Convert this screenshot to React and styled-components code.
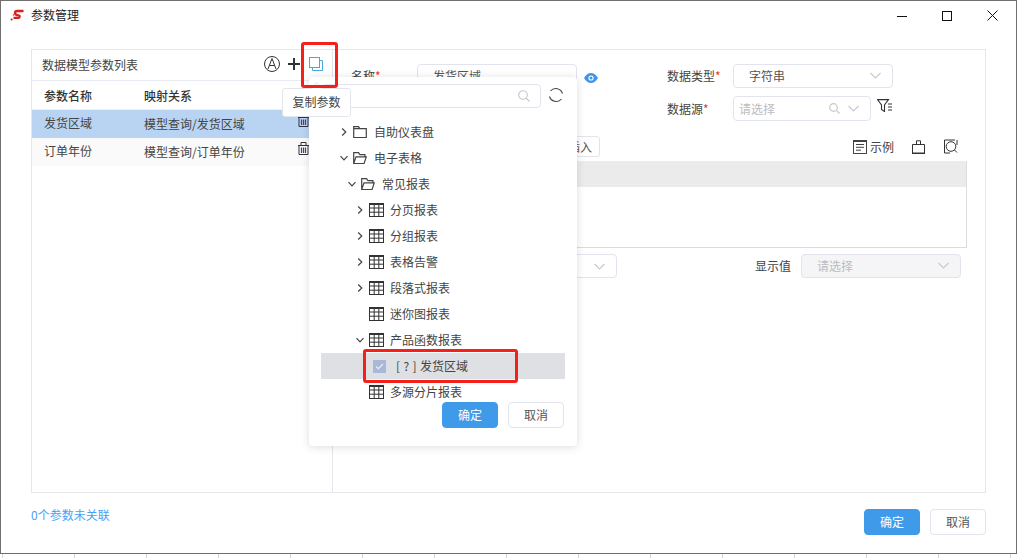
import React from 'react';
import styled, { createGlobalStyle } from 'styled-components';

const GlobalStyle = createGlobalStyle`
  html, body {
    margin: 0;
    padding: 0;
    background: #fff;
    overflow: hidden;
  }
  * {
    box-sizing: border-box;
  }
  svg {
    display: block;
    flex-shrink: 0;
  }
  body {
    font-family: "Noto Sans CJK SC", "Liberation Sans", sans-serif;
    font-size: 12px;
    color: #333;
  }
`;

const Page = styled.div`
  position: relative;
  width: 1018px;
  height: 558px;
  overflow: hidden;
  background: repeating-linear-gradient(
    90deg,
    #fff 0,
    #fff 2px,
    #d4d4d4 2px,
    #d4d4d4 3px,
    #fff 3px,
    #fff 72px
  );
`;

const Window = styled.div`
  width: 1017px;
  height: 554px;
  display: flex;
  flex-direction: column;
  background: #fff;
  border: 1px solid #6f6f6f;
`;

const TitleBar = styled.div`
  height: 29px;
  display: flex;
  align-items: center;
  padding-left: 9px;
  flex-shrink: 0;
`;

const Title = styled.div`
  margin-left: 6px;
  padding-bottom: 2px;
  font-size: 12px;
  color: #222;
`;

const WinButtons = styled.div`
  margin-left: auto;
  display: flex;
  align-items: center;
  padding-right: 18px;
  gap: 35px;
  color: #111;
`;

const Panel = styled.div`
  margin: 19px 30px 0 30px;
  width: 955px;
  height: 444px;
  display: flex;
  border: 1px solid #e5e6ec;
  flex-shrink: 0;
`;

const LeftPane = styled.div`
  width: 301px;
  border-right: 1px solid #e5e6ec;
  flex-shrink: 0;
`;

const PaneHead = styled.div`
  height: 31px;
  display: flex;
  align-items: center;
  padding: 0 0 2px 10px;
  border-bottom: 1px solid #e8ebf3;
`;

const PaneTitle = styled.div`
  flex: 1;
  color: #444;
`;

const HeadIcons = styled.div`
  display: flex;
  align-items: center;
  gap: 8px;
  padding-right: 9px;
`;

const CopyIcon = styled.svg`
  margin-left: 1px;
`;

const TableRow = styled.div`
  display: grid;
  grid-template-columns: 100px 154px 20px;
  align-items: center;
  padding-left: 12px;
  padding-bottom: ${p => (p.$head ? 0 : 2)}px;
  height: ${p => (p.$head ? 29 : 28)}px;
  font-weight: ${p => (p.$head ? 500 : 400)};
  color: ${p => (p.$head ? '#333' : '#444')};
  background: ${p => (p.$selected ? '#b9d4f2' : p.$head ? '#fff' : '#fafafa')};
  border-bottom: ${p => (p.$head ? '1px solid #eef0f5' : 'none')};
`;

const NameCell = styled.span`
  padding-bottom: 2px;
`;

const TrashCell = styled.span`
  padding-bottom: 6px;
`;

const RightPane = styled.div`
  flex: 1;
  padding: 14px 18px 0 18px;
  min-width: 0;
`;

const FormGrid = styled.div`
  display: grid;
  grid-template-columns: 66px 160px 90px 66px 160px;
  grid-template-rows: 24px 25px;
  row-gap: 8px;
  align-items: center;
`;

const Label = styled.div`
  color: #444;
  padding-bottom: ${p => (p.$up ? 2 : 0)}px;
`;

const Req = styled.span`
  color: #e33;
`;

const SelectBox = styled.div`
  height: ${p => p.$h || 24}px;
  width: ${p => p.$w || 160}px;
  display: flex;
  align-items: center;
  padding: 0 11px ${p => (p.$up ? 2 : 0)}px ${p => p.$pl || 15}px;
  gap: 8px;
  border: 1px solid #e2e3ec;
  border-radius: 4px;
  background: ${p => (p.$disabled ? '#f5f5f7' : '#fff')};
  color: ${p => (p.$placeholder ? '#bcbcc2' : '#555')};
`;

const SelectText = styled.span`
  flex: 1;
`;

const SourceCell = styled.div`
  display: flex;
  align-items: flex-start;
  gap: 6px;
`;

const FilterIcon = styled.svg`
  margin-top: 3px;
`;

const EyeCell = styled.div`
  padding: 4px 0 0 7px;
  color: #3f96e6;
  display: flex;
`;

const Toolbar = styled.div`
  margin-top: 15px;
  height: 21px;
  display: flex;
  align-items: center;
  justify-content: space-between;
  padding: 0 9px 0 199px;
`;

const ToolButton = styled.div`
  width: 50px;
  height: 21px;
  display: flex;
  align-items: center;
  justify-content: flex-end;
  padding-right: 7px;
  border: 1px solid #e2e3ec;
  border-radius: 3px;
  color: #555;
`;

const ToolIcons = styled.div`
  display: flex;
  align-items: center;
  gap: 18px;
  color: #333;
`;

const ExampleTool = styled.div`
  display: flex;
  align-items: center;
  gap: 3px;
  color: #444;
`;

const Editor = styled.div`
  margin-top: 4px;
  height: 87px;
  border: 1px solid #dcdcdc;
  border-top: none;
`;

const EditorHead = styled.div`
  height: 26px;
  background: #ebebeb;
`;

const BottomRow = styled.div`
  margin-top: 6px;
  display: flex;
  align-items: center;
  padding-left: 66px;
`;

const BottomLabel = styled.div`
  margin-left: 138px;
  width: 46px;
  padding-bottom: 2px;
  color: #444;
`;

const Footer = styled.div`
  display: flex;
  align-items: center;
  justify-content: space-between;
  padding: 16px 30px 0 30px;
`;

const LinkText = styled.div`
  color: #4a9ff5;
  margin-top: -15px;
`;

const ButtonRow = styled.div`
  display: flex;
  gap: 10px;
  justify-content: flex-end;
`;

const Btn = styled.div`
  width: 56px;
  height: 26px;
  display: flex;
  align-items: center;
  justify-content: center;
  padding-bottom: 2px;
  border-radius: 4px;
  background: ${p => (p.$primary ? '#409aea' : '#fff')};
  color: ${p => (p.$primary ? '#fff' : '#555')};
  border: 1px solid ${p => (p.$primary ? '#409aea' : '#e2e3ec')};
`;

/* overlays */
const Popover = styled.div`
  position: absolute;
  left: 309px;
  top: 77px;
  width: 268px;
  height: 369px;
  padding: 7px 12px 0;
  background: #fff;
  border-radius: 4px;
  box-shadow: 0 1px 8px rgba(60, 60, 80, 0.18);
`;

const SearchRow = styled.div`
  display: flex;
  align-items: center;
  gap: 7px;
  height: 24px;
`;

const SearchInput = styled.div`
  width: 220px;
  height: 24px;
  display: flex;
  align-items: center;
  justify-content: flex-end;
  padding-right: 10px;
  border: 1px solid #e2e3ec;
  border-radius: 4px;
  color: #c4c6ce;
`;

const RefreshIcon = styled.svg`
  margin-bottom: 2px;
`;

const Tree = styled.div`
  margin-top: 11px;
  height: 283px;
  overflow: hidden;
`;

const TreeRow = styled.div`
  height: 26px;
  display: flex;
  align-items: center;
  padding-left: ${p => 17 + p.$level * 8}px;
  background: ${p => (p.$selected ? '#dfe0e4' : 'transparent')};
  color: #444;
`;

const Caret = styled.span`
  width: 12px;
  height: 12px;
  display: flex;
  align-items: center;
  justify-content: center;
  margin-right: 3px;
  color: #444;
  flex-shrink: 0;
`;

const NodeText = styled.span`
  margin-left: ${p => (p.$folder ? 7 : 6)}px;
  padding-bottom: 2px;
`;

const Check = styled.span`
  width: 13px;
  height: 13px;
  margin-left: -4px;
  background: #a9b7d9;
  display: flex;
  align-items: center;
  justify-content: center;
  flex-shrink: 0;
`;

const ParamText = styled.span`
  margin-left: 10px;
  padding-bottom: 2px;
  word-spacing: 0.7px;
  color: #444;
`;

const PopButtons = styled(ButtonRow)`
  padding-right: 1px;
`;

const Tooltip = styled.div`
  position: absolute;
  left: 282px;
  top: 88px;
  width: 69px;
  height: 29px;
  display: flex;
  align-items: center;
  justify-content: center;
  padding-bottom: 2px;
  background: #fff;
  border: 1px solid #e4e5ec;
  border-radius: 3px;
  color: #444;
  &::before {
    content: '';
    position: absolute;
    left: 29px;
    top: -5px;
    width: 8px;
    height: 8px;
    background: #fff;
    border-left: 1px solid #e4e5ec;
    border-top: 1px solid #e4e5ec;
    transform: rotate(45deg);
  }
`;

const RedMark = styled.div`
  position: absolute;
  left: ${p => p.$x}px;
  top: ${p => p.$y}px;
  width: ${p => p.$w}px;
  height: ${p => p.$h}px;
  border: 3px solid #f5201a;
  border-radius: 3px;
  pointer-events: none;
`;

/* icons */
const Icon = ({ size = 14, w, h, children, sw = 1.2 }) => (
  <svg
    width={w || size}
    height={h || size}
    viewBox={`0 0 ${w || size} ${h || size}`}
    fill="none"
    stroke="currentColor"
    strokeWidth={sw}
  >
    {children}
  </svg>
);

const Logo = () => (
  <svg width="15" height="13" viewBox="0 0 15 13">
    <path
      d="M13.5 2H7.2C5.6 2 5 3 5 4c0 1.2 1 1.8 2 2l2 .5c1 .3 1 2-.5 2.4H3.5"
      fill="none"
      stroke="#d9201f"
      strokeWidth="2.3"
    />
    <circle cx="1.6" cy="10.5" r="1.1" fill="#d9201f" />
    <circle cx="3.4" cy="6" r="0.7" fill="#d9201f" />
  </svg>
);

const ChevronDown = () => (
  <svg width="11" height="7" viewBox="0 0 11 7" fill="none" stroke="#c6c8d2" strokeWidth="1.1">
    <path d="M.5 1l5 5 5-5" />
  </svg>
);

const TrashIcon = () => (
  <Icon w={11} h={13} sw={1}>
    <path d="M0 3.500h11M3 3.500V.5h5v3M1 3.500v9h9v-9" stroke="#333" />
    <path d="M3.500 5.500v5.500M5.500 5.500v5.500M7.500 5.500v5.500" stroke="#6a2a8a" strokeWidth="1.200" />
  </Icon>
);

const ClosedFolder = () => (
  <Icon size={14}>
    <path d="M.7 12.5V1.6h4.8l1.4 2h6.4v8.9z M.7 3.6h6" />
  </Icon>
);

const OpenFolder = () => (
  <Icon size={14}>
    <path d="M.7 12.5V1.6h4.8l1.4 2h5v2.2M.7 12.5h10.4l2.2-6.7H3z" />
  </Icon>
);

const TableIcon = () => (
  <svg width="15" height="14" viewBox="0 0 15 14" fill="none" stroke="#333" strokeWidth="1">
    <rect x="0.5" y="0.5" width="14" height="13" />
    <path d="M0 1h15" strokeWidth="2" />
    <path d="M.5 5h14M.5 9.2h14M5.2 1v13M9.8 1v13" />
  </svg>
);

const CaretIcon = ({ open }) => (
  <svg width="10" height="10" viewBox="0 0 10 10" fill="none" stroke="#444" strokeWidth="1.2">
    <path d={open ? 'M1.5 3.2L5 6.8l3.5-3.6' : 'M3.2 1.5L6.8 5 3.2 8.5'} />
  </svg>
);

const treeNodes = [
  { label: '自助仪表盘', level: 0, kind: 'closed', caret: 'right' },
  { label: '电子表格', level: 0, kind: 'open', caret: 'down' },
  { label: '常见报表', level: 1, kind: 'open', caret: 'down' },
  { label: '分页报表', level: 2, kind: 'table', caret: 'right' },
  { label: '分组报表', level: 2, kind: 'table', caret: 'right' },
  { label: '表格告警', level: 2, kind: 'table', caret: 'right' },
  { label: '段落式报表', level: 2, kind: 'table', caret: 'right' },
  { label: '迷你图报表', level: 2, kind: 'table' },
  { label: '产品函数报表', level: 2, kind: 'table', caret: 'down' },
  { label: '[ ? ] 发货区域', level: 3, kind: 'param' },
  { label: '多源分片报表', level: 2, kind: 'table' }
];

const TreeNode = ({ label, level, kind, caret }) => (
  <TreeRow $level={level} $selected={kind === 'param'}>
    <Caret>{caret && <CaretIcon open={caret === 'down'} />}</Caret>
    {kind === 'closed' && <ClosedFolder />}
    {kind === 'open' && <OpenFolder />}
    {kind === 'table' && <TableIcon />}
    {kind === 'param' ? (
      <>
        <Check>
          <svg width="9" height="7" viewBox="0 0 9 7" fill="none" stroke="#e8ecf6" strokeWidth="1.3">
            <path d="M1 3.5l2.4 2.2L8 1" />
          </svg>
        </Check>
        <ParamText>{label}</ParamText>
      </>
    ) : (
      <NodeText $folder={kind !== 'table'}>{label}</NodeText>
    )}
  </TreeRow>
);

export default function App() {
  return (
    <Page>
      <GlobalStyle />
      <Window>
        <TitleBar>
          <Logo />
          <Title>参数管理</Title>
          <WinButtons>
            <Icon w={10} h={10} sw={1}>
              <path d="M0 5.5h10" />
            </Icon>
            <Icon w={10} h={10} sw={1}>
              <rect x="0.5" y="0.5" width="9" height="9" />
            </Icon>
            <Icon w={11} h={11} sw={1}>
              <path d="M.5.5l10 10M10.5.5l-10 10" />
            </Icon>
          </WinButtons>
        </TitleBar>

        <Panel>
          <LeftPane>
            <PaneHead>
              <PaneTitle>数据模型参数列表</PaneTitle>
              <HeadIcons>
                <Icon size={16} sw={1}>
                  <circle cx="8" cy="8" r="7.5" />
                  <path d="M4 13L8 2.500 12 13M5.500 9.500h5" />
                </Icon>
                <Icon size={12} sw={2}>
                  <path d="M6 0v12M0 6h12" />
                </Icon>
                <CopyIcon width="14" height="14" viewBox="0 0 14 14" fill="none" stroke="#46a9dc" strokeWidth="1">
                  <rect x="0.5" y="0.5" width="10" height="10" />
                  <path d="M10.500 3.500h3v10h-10v-3" />
                </CopyIcon>
              </HeadIcons>
            </PaneHead>
            <TableRow $head>
              <span>参数名称</span>
              <span>映射关系</span>
            </TableRow>
            <TableRow $selected>
              <NameCell>发货区域</NameCell>
              <span>模型查询/发货区域</span>
              <TrashCell>
                <TrashIcon />
              </TrashCell>
            </TableRow>
            <TableRow>
              <NameCell>订单年份</NameCell>
              <span>模型查询/订单年份</span>
              <TrashCell>
                <TrashIcon />
              </TrashCell>
            </TableRow>
          </LeftPane>

          <RightPane>
            <FormGrid>
              <Label $up>
                名称<Req>*</Req>
              </Label>
              <SelectBox $up>
                <SelectText>发货区域</SelectText>
              </SelectBox>
              <EyeCell>
                <svg width="14" height="10" viewBox="0 0 14 10">
                  <path d="M0 5c2-3.4 4.4-5 7-5s5 1.6 7 5c-2 3.4-4.4 5-7 5S2 8.400 0 5z" fill="#3f96e6" />
                  <circle cx="7" cy="5" r="2.6" fill="#fff" />
                  <circle cx="7" cy="5" r="1.500" fill="#3f96e6" />
                </svg>
              </EyeCell>
              <Label $up>
                数据类型<Req>*</Req>
              </Label>
              <SelectBox $up>
                <SelectText>字符串</SelectText>
                <ChevronDown />
              </SelectBox>

              <span />
              <SelectBox $placeholder />
              <span />
              <Label>
                数据源<Req>*</Req>
              </Label>
              <SourceCell>
                <SelectBox $w={138} $h={25} $pl={5} $placeholder>
                  <SelectText>请选择</SelectText>
                  <svg width="11" height="11" viewBox="0 0 11 11" fill="none" stroke="#c6c8d2" strokeWidth="1.2">
                    <circle cx="4.500" cy="4.500" r="3.800" />
                    <path d="M7.300 7.300L10.500 10.500" />
                  </svg>
                  <ChevronDown />
                </SelectBox>
                <FilterIcon width="15" height="13" viewBox="0 0 15 13" fill="none" stroke="#333" strokeWidth="1.1">
                  <path d="M.5.600h11L7.500 6v6.500L4.500 10.500V6z" />
                  <path d="M11 5h4M11 8h4M11 11h4" />
                </FilterIcon>
              </SourceCell>
            </FormGrid>

            <Toolbar>
              <ToolButton>插入</ToolButton>
              <ToolIcons>
                <ExampleTool>
                  <Icon size={14} sw={1}>
                    <rect x="0.5" y="0.5" width="13" height="13" />
                    <path d="M0 1h14" strokeWidth="2" />
                    <path d="M3 4.500h8M3 7.300h8M3 10.200h5" />
                  </Icon>
                  示例
                </ExampleTool>
                <Icon w={13} h={14} sw={1}>
                  <path d="M.5 4.500h12V13H.5zM4.500 4.500V.8h4v3.700" />
                  <path d="M0 13.500h13" />
                </Icon>
                <Icon w={15} h={15} sw={1}>
                  <path d="M12 1H1.500v13H7" />
                  <circle cx="8" cy="7.500" r="4.800" />
                  <path d="M11.500 11l2.500 2.500M14 1v5" />
                </Icon>
              </ToolIcons>
            </Toolbar>

            <Editor>
              <EditorHead />
            </Editor>

            <BottomRow>
              <SelectBox $w={200} $placeholder>
                <SelectText />
                <ChevronDown />
              </SelectBox>
              <BottomLabel>显示值</BottomLabel>
              <SelectBox $disabled $placeholder $up>
                <SelectText>请选择</SelectText>
                <ChevronDown />
              </SelectBox>
            </BottomRow>
          </RightPane>
        </Panel>

        <Footer>
          <LinkText>0个参数未关联</LinkText>
          <ButtonRow>
            <Btn $primary>确定</Btn>
            <Btn>取消</Btn>
          </ButtonRow>
        </Footer>
      </Window>

      <Popover>
        <SearchRow>
          <SearchInput>
            <svg width="12" height="12" viewBox="0 0 12 12" fill="none" stroke="currentColor" strokeWidth="1.1">
              <circle cx="5" cy="5" r="4.300" />
              <path d="M8 8l3.500 3.500" />
            </svg>
          </SearchInput>
          <RefreshIcon width="16" height="16" viewBox="0 0 16 16" fill="none" stroke="#444" strokeWidth="1.100">
            <path d="M14.500 6.500A7 7 0 0 0 2.500 4M1.500 9.500A7 7 0 0 0 13.500 12" />
          </RefreshIcon>
        </SearchRow>
        <Tree>
          {treeNodes.map(node => (
            <TreeNode key={node.label} {...node} />
          ))}
        </Tree>
        <PopButtons>
          <Btn $primary>确定</Btn>
          <Btn>取消</Btn>
        </PopButtons>
      </Popover>

      <Tooltip>复制参数</Tooltip>
      <RedMark $x={301} $y={42} $w={37} $h={46} />
      <RedMark $x={363} $y={349} $w={155} $h={34} />
    </Page>
  );
}
